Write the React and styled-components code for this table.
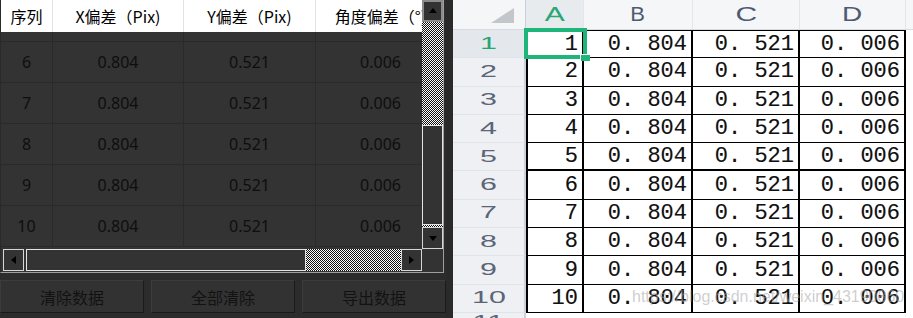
import styled, { createGlobalStyle } from 'styled-components'

const Global = createGlobalStyle`
    html, body { margin: 0; padding: 0; background: #2c2c2c; }
    * { box-sizing: border-box; }
`

const Page = styled.div`
    display: flex;
    width: 913px;
    height: 318px;
    overflow: hidden;
`

/* ---------- left: dark table panel ---------- */

const Left = styled.section`
    width: 446px;
    background: #2c2c2c;
    display: flex;
    flex-direction: column;
`

const TableBox = styled.div`
    width: 444px;
    height: 273px;
    display: grid;
    grid-template-columns: 421px 21px;
    grid-template-rows: 249px 23px;
    border-left: 1px solid #2a2a2a;
    border-right: 1px solid #9e9e9e;
    border-bottom: 1px solid #9e9e9e;
`

const Viewport = styled.div`
    overflow: hidden;
    background: #333;
    display: flex;
    flex-direction: column;
`

const COLS = '52px 131px 132px 130px'

const HeaderRow = styled.div`
    display: grid;
    grid-template-columns: ${COLS};
    height: 32px;
    flex: none;
    background: #fff;
`

const HeadCell = styled.div`
    display: flex;
    align-items: center;
    justify-content: center;
    border-right: 1px solid #e3e3e3;
    font-family: "Noto Sans CJK SC", "Noto Sans", sans-serif;
    font-size: 16px;
    color: #000;
    white-space: nowrap;
`

const Row = styled.div`
    display: grid;
    grid-template-columns: ${COLS};
    height: ${({ $h }) => $h || '41px'};
    flex: none;
    border-bottom: 1px solid #2a2a2a;
`

const Cell = styled.div`
    display: flex;
    align-items: center;
    justify-content: center;
    border-right: 1px solid #2a2a2a;
    font-family: "Noto Sans", "Noto Sans CJK SC", sans-serif;
    font-size: 16px;
    color: #0e0e0e;
`

const checker = `
    background-color: #fff;
    background-image: repeating-conic-gradient(#111 0 25%, #fff 0 50%);
    background-size: 2px 2px;
`

const VScroll = styled.div`
    background: #333;
    display: flex;
    flex-direction: column;
`

const HScroll = styled.div`
    background: #333;
    display: flex;
    padding: 0 0 1px 1px;
`

const Corner = styled.div`
    background: #333;
`

const ArrowBtn = styled.div`
    flex: none;
    width: ${({ $w }) => $w || '100%'};
    height: ${({ $h }) => $h || '100%'};
    margin-left: ${({ $ml }) => $ml || 0};
    background: #333;
    border: ${({ $tone }) => ($tone === 'dark' ? '2px solid #8c8c8c' : '1px solid #d6d6d6')};
    display: flex;
    align-items: center;
    justify-content: center;
`

const Arrow = styled.span`
    width: 0;
    height: 0;
    border: 4px solid transparent;
    ${({ $dir }) => $dir === 'up' && 'border-bottom: 5px solid #000; border-top: 0; margin-top: -2px;'}
    ${({ $dir }) => $dir === 'down' && 'border-top: 5px solid #000; border-bottom: 0;'}
    ${({ $dir }) => $dir === 'left' && 'border-right: 5px solid #000; border-left: 0;'}
    ${({ $dir }) => $dir === 'right' && 'border-left: 5px solid #000; border-right: 0;'}
`

const Track = styled.div`
    ${checker}
    flex: ${({ $size }) => ($size ? `0 0 ${$size}` : '1')};
`

const Thumb = styled.div`
    flex: none;
    width: ${({ $w }) => $w || '100%'};
    height: ${({ $h }) => $h || '100%'};
    margin-left: ${({ $ml }) => $ml || 0};
    background: #333;
    border: 1px solid #e4e4e4;
`

const ButtonRow = styled.div`
    display: grid;
    grid-template-columns: repeat(3, 1fr);
    column-gap: 7px;
    margin-top: 7px;
    height: 33px;
`

const Btn = styled.button`
    background: #323232;
    border: 1px solid;
    border-color: #3c3c3c #1a1a1a #1a1a1a #3c3c3c;
    font-family: "Noto Sans CJK SC", "Noto Sans", sans-serif;
    font-size: 16px;
    color: #121212;
    padding: 0;
`

const Divider = styled.div`
    width: 7px;
    background: #2a2a2a;
`

/* ---------- right: spreadsheet ---------- */

const Right = styled.section`
    flex: 1;
    position: relative;
    overflow: hidden;
    background: #f4f5f7;
`

const Sheet = styled.div`
    display: grid;
    grid-template-columns: 73px 58px 109px 107px 106px 1fr;
    grid-template-rows: 30px repeat(10, 28.3px) 1fr;
    height: 318px;
`

const Corner2 = styled.div`
    background: #f5f6f8;
    border-right: 1px solid #c8d0dc;
    border-bottom: 1px solid #d7dbe2;
    display: flex;
    align-items: flex-end;
    justify-content: flex-end;
    padding: 0 11px 6px 0;
`

const ColHead = styled.div`
    background: ${({ $active }) => ($active ? '#e8ebee' : '#f5f6f8')};
    border-right: 1px solid #e3e6eb;
    border-bottom: 1px solid #d7dbe2;
    display: flex;
    align-items: center;
    justify-content: center;
    font-family: "Liberation Sans", sans-serif;
    font-size: 20px;
    color: ${({ $active }) => ($active ? '#27a875' : '#4d5a72')};
`

const Stretch = styled.span`
    display: inline-block;
    transform: scaleX(${({ $x }) => $x});
`

const RowHead = styled.div`
    background: ${({ $active }) => ($active ? '#e4e7ec' : '#eef0f3')};
    border-right: 2px solid #c9d1de;
    border-bottom: 1px solid #dfe3ea;
    display: flex;
    align-items: center;
    justify-content: center;
    font-family: "Liberation Sans", sans-serif;
    font-size: 16px;
    color: ${({ $active }) => ($active ? '#24a670' : '#5b6577')};
`

const DataCell = styled.div`
    position: relative;
    z-index: ${({ $sel }) => ($sel ? 5 : 'auto')};
    background: #fff;
    border-right: 2px solid #000;
    border-left: ${({ $first }) => ($first ? '2px solid #000' : 'none')};
    border-top: ${({ $top }) => ($top ? '1px solid #000' : 'none')};
    border-bottom: ${({ $thick }) => ($thick ? '2px' : '1px')} solid #000;
    display: flex;
    align-items: center;
    justify-content: flex-end;
    padding-right: 4px;
    font-family: "Liberation Mono", monospace;
    font-size: 22px;
    color: #111;
    text-shadow: 0.5px 0 rgba(255, 160, 60, 0.3), -0.5px 0 rgba(40, 140, 255, 0.3);
    white-space: pre;
`

const Blank = styled.div`
    background: ${({ $head }) => ($head ? '#f5f6f8' : '#fff')};
    border-bottom: ${({ $head }) => ($head ? '1px solid #d7dbe2' : 'none')};
`

const Selection = styled.div`
    position: absolute;
    top: -3px;
    left: -4px;
    right: -5px;
    bottom: -2px;
    border: 4px solid #1db57a;
    pointer-events: none;
`

const Handle = styled.div`
    position: absolute;
    right: -7px;
    bottom: -6px;
    width: 10px;
    height: 7px;
    background: #1db57a;
    border-left: 1px solid #fff;
    border-top: 1px solid #fff;
`

const Watermark = styled.div`
    position: absolute;
    left: 179px;
    top: 288px;
    font-family: "Liberation Sans", sans-serif;
    font-size: 16px;
    color: rgba(165, 165, 165, 0.55);
    white-space: nowrap;
    pointer-events: none;
`

const rows = [6, 7, 8, 9, 10]
const sheetRows = [1, 2, 3, 4, 5, 6, 7, 8, 9, 10]

export default function App() {
    return (
        <Page>
            <Global />
            <Left>
                <TableBox>
                    <Viewport>
                        <HeaderRow>
                            <HeadCell>序列</HeadCell>
                            <HeadCell>X偏差（Pix)</HeadCell>
                            <HeadCell>Y偏差（Pix)</HeadCell>
                            <HeadCell>角度偏差（°)</HeadCell>
                        </HeaderRow>
                        {/* row 5 scrolled mostly out of view */}
                        <Row $h="10px">
                            <Cell />
                            <Cell />
                            <Cell />
                            <Cell />
                        </Row>
                        {rows.map((n) => (
                            <Row key={n}>
                                <Cell>{n}</Cell>
                                <Cell>0.804</Cell>
                                <Cell>0.521</Cell>
                                <Cell>0.006</Cell>
                            </Row>
                        ))}
                    </Viewport>
                    <VScroll>
                        <ArrowBtn $h="22px" $tone="dark"><Arrow $dir="up" /></ArrowBtn>
                        <Track $size="103px" />
                        <Thumb $h="100px" />
                        <Track $size="2px" />
                        <ArrowBtn $h="22px"><Arrow $dir="down" /></ArrowBtn>
                    </VScroll>
                    <HScroll>
                        <ArrowBtn $w="21px" $ml="1px"><Arrow $dir="left" /></ArrowBtn>
                        <Thumb $w="280px" $ml="2px" />
                        <Track />
                        <ArrowBtn $w="21px"><Arrow $dir="right" /></ArrowBtn>
                    </HScroll>
                    <Corner />
                </TableBox>
                <ButtonRow>
                    <Btn>清除数据</Btn>
                    <Btn>全部清除</Btn>
                    <Btn>导出数据</Btn>
                </ButtonRow>
            </Left>
            <Divider />
            <Right>
                <Sheet>
                    <Corner2>
                        <svg width="23" height="15" viewBox="0 0 23 15">
                            <polygon points="23,0 23,15 0,15" fill="#c3c6cb" />
                        </svg>
                    </Corner2>
                    <ColHead $active><Stretch $x={1.5}>A</Stretch></ColHead>
                    <ColHead><Stretch $x={1.1}>B</Stretch></ColHead>
                    <ColHead><Stretch $x={1.5}>C</Stretch></ColHead>
                    <ColHead><Stretch $x={1.4}>D</Stretch></ColHead>
                    <Blank $head />
                    {sheetRows.map((n) => [
                        <RowHead key={`h${n}`} $active={n === 1}>
                            <Stretch $x={1.9}>{n}</Stretch>
                        </RowHead>,
                        <DataCell key={`a${n}`} $first $sel={n === 1} $top={n === 1} $thick={n === 5}>
                            {n}
                            {n === 1 && (
                                <Selection>
                                    <Handle />
                                </Selection>
                            )}
                        </DataCell>,
                        <DataCell key={`b${n}`} $top={n === 1} $thick={n === 5}>0. 804</DataCell>,
                        <DataCell key={`c${n}`} $top={n === 1} $thick={n === 5}>0. 521</DataCell>,
                        <DataCell key={`d${n}`} $top={n === 1} $thick={n === 5}>0. 006</DataCell>,
                        <Blank key={`e${n}`} />,
                    ])}
                    <RowHead><Stretch $x={1.9}>11</Stretch></RowHead>
                    <Blank />
                    <Blank />
                    <Blank />
                    <Blank />
                    <Blank />
                </Sheet>
                <Watermark>https://blog.csdn.net/weixin_43190860</Watermark>
            </Right>
        </Page>
    )
}
